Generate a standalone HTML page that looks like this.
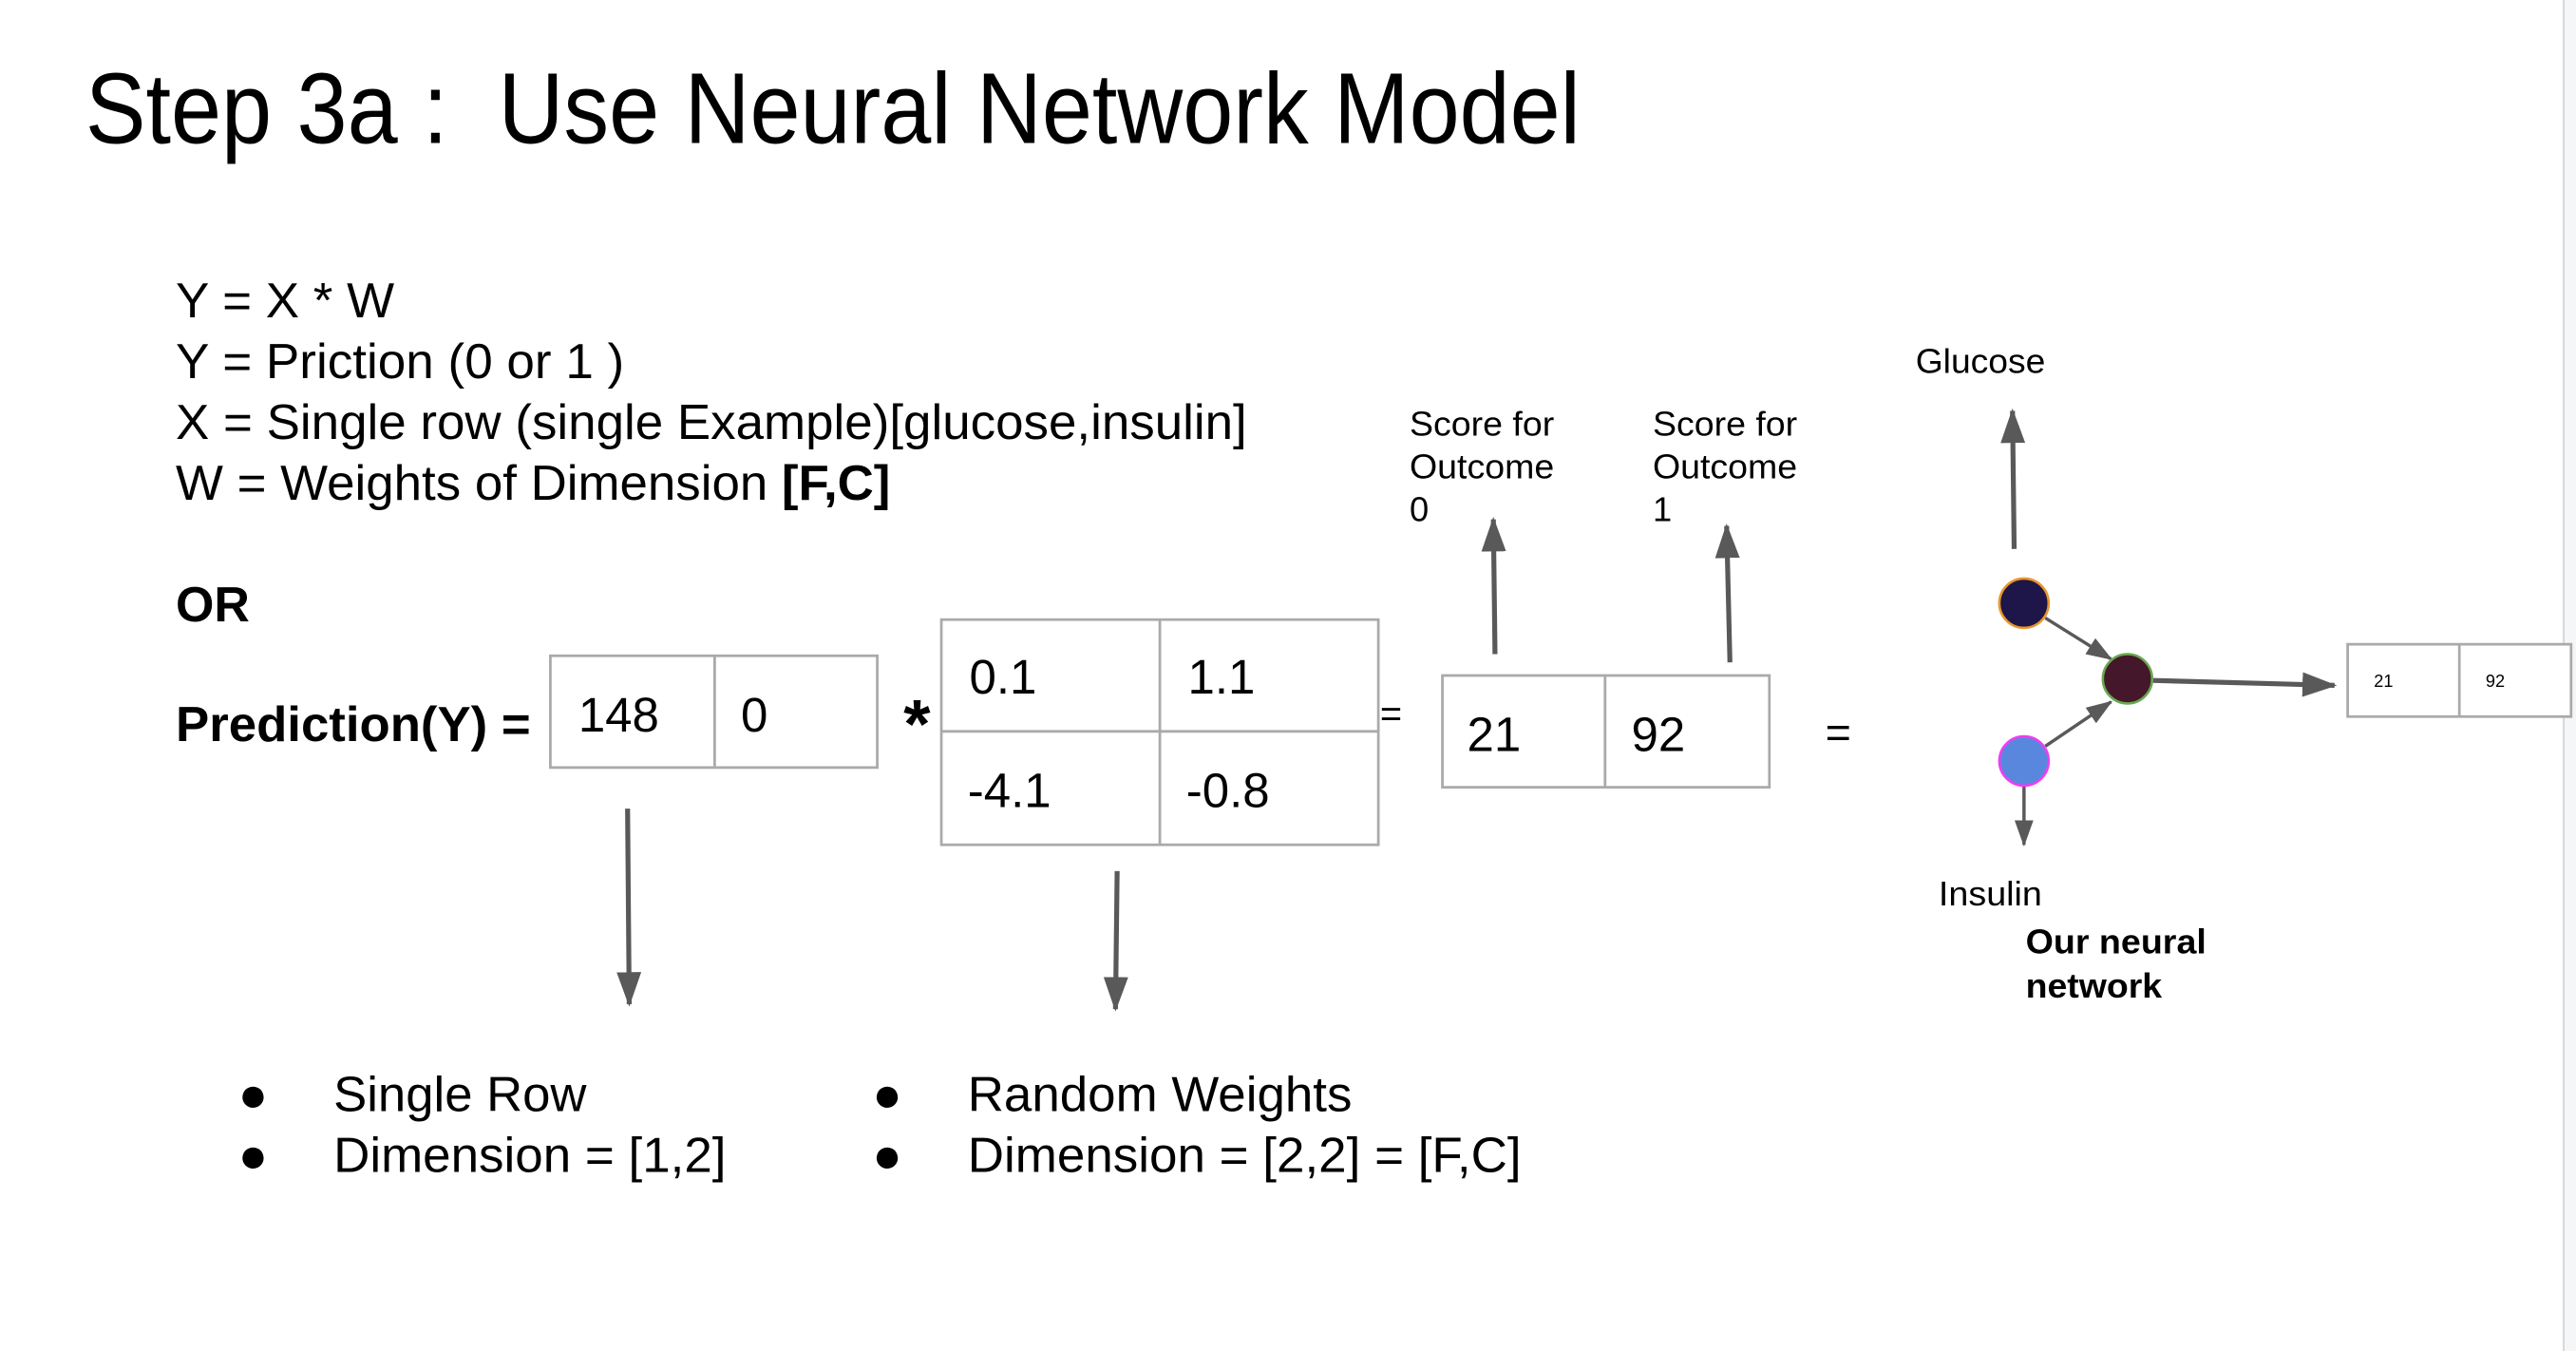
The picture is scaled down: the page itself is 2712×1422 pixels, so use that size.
<!DOCTYPE html>
<html><head><meta charset="utf-8"><style>
html,body{margin:0;padding:0;background:#fff;width:2712px;height:1422px;overflow:hidden}
svg{display:block}
text{font-family:"Liberation Sans",Arial,sans-serif;fill:#000;white-space:pre}
.b{font-weight:bold}
</style></head><body>
<svg width="2712" height="1422" viewBox="0 0 1568 822" preserveAspectRatio="none" xmlns="http://www.w3.org/2000/svg">
<defs>
<marker id="ah" viewBox="0 0 14 10" refX="13" refY="5" markerWidth="7" markerHeight="5" markerUnits="strokeWidth" orient="auto"><path d="M0,0 L14,5 L0,10 z" fill="#595959"/></marker>
<marker id="ah2" viewBox="0 0 14 10" refX="13" refY="5" markerWidth="8" markerHeight="6" markerUnits="strokeWidth" orient="auto"><path d="M0,0 L14,5 L0,10 z" fill="#595959"/></marker>
</defs>
<rect x="1560" y="0" width="8" height="822" fill="#f5f6f8"/>
<line x1="1560.5" y1="0" x2="1560.5" y2="822" stroke="#d4d4d4" stroke-width="1"/>
<text x="52" y="87" font-size="61" textLength="910" lengthAdjust="spacingAndGlyphs" xml:space="preserve">Step 3a :  Use Neural Network Model</text>
<g font-size="30">
<text x="107" y="193" textLength="133" lengthAdjust="spacingAndGlyphs">Y = X * W</text>
<text x="107" y="230" textLength="273" lengthAdjust="spacingAndGlyphs">Y = Priction (0 or 1 )</text>
<text x="107" y="267" textLength="652" lengthAdjust="spacingAndGlyphs">X = Single row (single Example)[glucose,insulin]</text>
<text x="107" y="304" textLength="435" lengthAdjust="spacingAndGlyphs">W = Weights of Dimension <tspan class="b">[F,C]</tspan></text>
<text x="107" y="378" class="b">OR</text>
<text x="107" y="451" class="b" textLength="216" lengthAdjust="spacingAndGlyphs">Prediction(Y) =</text>
</g>
<g fill="#fff" stroke="#aaa" stroke-width="1.6">
<rect x="335" y="399" width="199" height="68"/><line x1="435" y1="399" x2="435" y2="467"/>
<rect x="573" y="377" width="266" height="137"/><line x1="706" y1="377" x2="706" y2="514"/><line x1="573" y1="445" x2="839" y2="445"/>
<rect x="878" y="411" width="199" height="68"/><line x1="977" y1="411" x2="977" y2="479"/>
<rect x="1429" y="392" width="136" height="44"/><line x1="1497" y1="392" x2="1497" y2="436"/>
</g>
<g font-size="29.5">
<text x="352" y="445">148</text><text x="451" y="445">0</text>
<text x="590" y="422">0.1</text><text x="723" y="422">1.1</text>
<text x="589" y="491">-4.1</text><text x="722" y="491">-0.8</text>
<text x="893" y="457">21</text><text x="993" y="457">92</text>
<text x="550" y="455" font-size="42" class="b">*</text>
<text x="1111" y="455" font-size="27">=</text>
</g>
<text x="840" y="442" font-size="23">=</text>
<g font-size="21">
<text x="858" y="265" textLength="88" lengthAdjust="spacingAndGlyphs">Score for</text><text x="858" y="291" textLength="88" lengthAdjust="spacingAndGlyphs">Outcome</text><text x="858" y="317">0</text>
<text x="1006" y="265" textLength="88" lengthAdjust="spacingAndGlyphs">Score for</text><text x="1006" y="291" textLength="88" lengthAdjust="spacingAndGlyphs">Outcome</text><text x="1006" y="317">1</text>
<text x="1166" y="227" textLength="79" lengthAdjust="spacingAndGlyphs">Glucose</text>
<text x="1180" y="551" textLength="63" lengthAdjust="spacingAndGlyphs">Insulin</text>
<text x="1233" y="580" class="b" textLength="110" lengthAdjust="spacingAndGlyphs">Our neural</text>
<text x="1233" y="607" class="b" textLength="83" lengthAdjust="spacingAndGlyphs">network</text>
</g>
<text x="1445" y="418" font-size="10.5">21</text><text x="1513" y="418" font-size="10.5">92</text>
<g stroke="#595959" stroke-width="3" fill="none" marker-end="url(#ah)">
<line x1="910" y1="398" x2="909" y2="316"/>
<line x1="1053" y1="403" x2="1051" y2="320"/>
<line x1="382" y1="492" x2="383" y2="611"/>
<line x1="680" y1="530" x2="679" y2="614"/>
<line x1="1226" y1="334" x2="1225" y2="250"/>
<line x1="1310" y1="414" x2="1421" y2="417"/>
</g>
<g stroke="#595959" stroke-width="2" fill="none" marker-end="url(#ah2)">
<line x1="1245" y1="376" x2="1285" y2="401"/>
<line x1="1245" y1="454" x2="1285" y2="427"/>
<line x1="1232" y1="478" x2="1232" y2="514"/>
</g>
<circle cx="1232" cy="367" r="15" fill="#1e1548" stroke="#e8962e" stroke-width="1.5"/>
<circle cx="1295" cy="413" r="15" fill="#45172b" stroke="#6aa84f" stroke-width="1.5"/>
<circle cx="1232" cy="463" r="15" fill="#5a87de" stroke="#f03ef0" stroke-width="1.5"/>
<g font-size="30">
<text x="145" y="676">●</text><text x="203" y="676" textLength="154" lengthAdjust="spacingAndGlyphs">Single Row</text>
<text x="145" y="713">●</text><text x="203" y="713" textLength="239" lengthAdjust="spacingAndGlyphs">Dimension = [1,2]</text>
<text x="531" y="676">●</text><text x="589" y="676" textLength="234" lengthAdjust="spacingAndGlyphs">Random Weights</text>
<text x="531" y="713">●</text><text x="589" y="713" textLength="337" lengthAdjust="spacingAndGlyphs">Dimension = [2,2] = [F,C]</text>
</g>
</svg>
</body></html>
